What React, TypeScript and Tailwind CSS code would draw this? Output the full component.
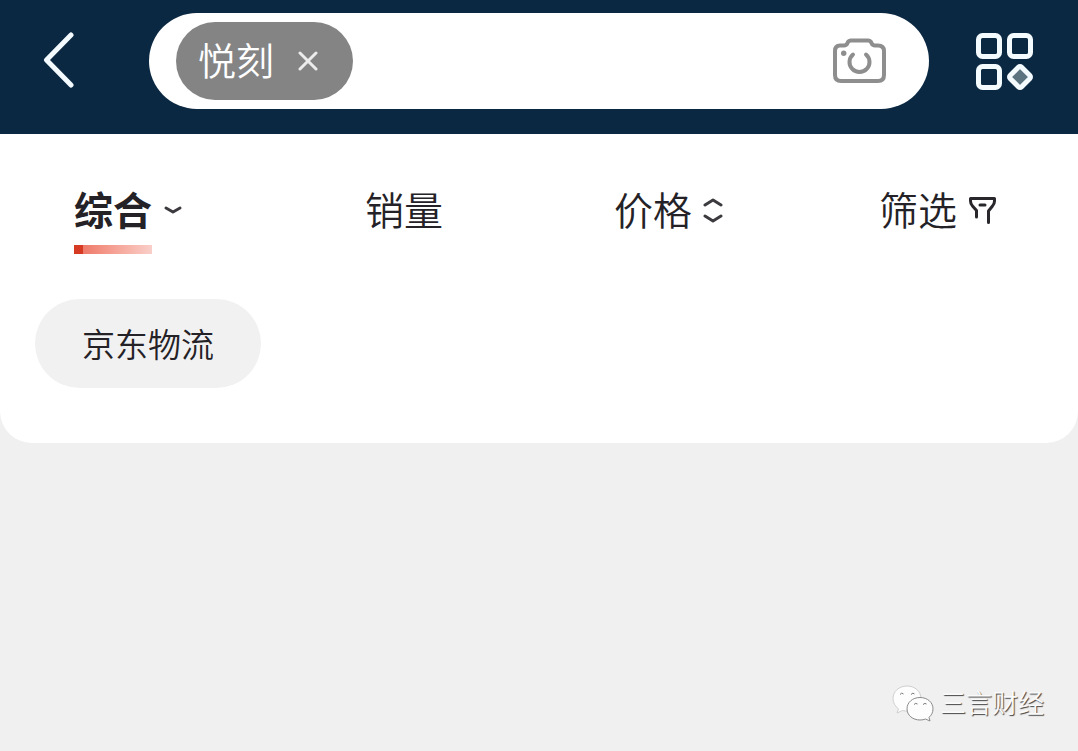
import { useState } from 'react';

function BackIcon() {
  return (
    <svg width="32" height="58" viewBox="0 0 32 58" fill="none" stroke="#f4fbff" strokeWidth="5" strokeLinecap="round" strokeLinejoin="round">
      <path d="M29 3 L4.500 28 L29 53" />
    </svg>
  );
}

function CloseIcon() {
  return (
    <svg width="20" height="20" viewBox="0 0 20 20" fill="none" stroke="#ececec" strokeWidth="3" strokeLinecap="round">
      <path d="M2 2 L18 18 M18 2 L2 18" />
    </svg>
  );
}

function CameraIcon() {
  return (
    <svg width="54" height="46" viewBox="0 0 54 46" fill="none" stroke="#8e8e8f" strokeWidth="4" strokeLinecap="round" strokeLinejoin="round">
      <path d="M7 7.5 H11 Q13.500 7.500 14.500 5 Q15.500 2.500 18 2.500 H35 Q37.500 2.500 38.500 5 Q39.500 7.500 42 7.500 H45 Q51 7.500 51 13 V37 Q51 43 45 43 H8 Q2 43 2 37 V13 Q2 7.500 7 7.500 Z" />
      <path d="M20 16.500 A10 10 0 1 0 33 16.500" />
      <circle cx="10.7" cy="15.3" r="2.7" fill="#8e8e8f" stroke="none" />
    </svg>
  );
}

function MenuIcon() {
  return (
    <svg width="58" height="58" viewBox="0 0 58 58" fill="none" stroke="#f4fbff" strokeWidth="5">
      <rect x="2.5" y="3.5" width="21" height="21" rx="4" />
      <rect x="33.5" y="3.5" width="21" height="21" rx="4" />
      <rect x="2.5" y="34.5" width="21" height="21" rx="4" />
      <rect x="36" y="37" width="16" height="16" rx="2" fill="#5c7480" transform="rotate(45 44 45)" />
    </svg>
  );
}

function ChevronIcon() {
  return (
    <svg width="20" height="10" viewBox="0 0 20 10" fill="none" stroke="#3c3a3e" strokeWidth="3" strokeLinecap="round" strokeLinejoin="round">
      <path d="M3 3 L10 7 L17 3" />
    </svg>
  );
}

function SortIcon() {
  return (
    <svg width="20" height="26" viewBox="0 0 20 26" fill="none" stroke="#3c3a3e" strokeWidth="3" strokeLinecap="round" strokeLinejoin="round">
      <path d="M2 8 L10 3 L18 8" />
      <path d="M2 19 L10 24 L18 19" />
    </svg>
  );
}

function FilterIcon() {
  return (
    <svg width="28" height="28" viewBox="0 0 28 28" fill="none" stroke="#29272b" strokeWidth="3" strokeLinecap="round" strokeLinejoin="round">
      <path d="M8.500 21 V14.500 L4.500 10 Q2.500 8 2.500 5 V2.500 H26.500 V5 Q26.500 8 24.500 10 L20.500 15 V26.500" />
      <path d="M12 9 H17" />
    </svg>
  );
}

function WechatIcon() {
  return (
    <svg width="42" height="38" viewBox="0 0 42 38" fill="#fdfdfd" stroke="#8a8a8a" strokeWidth="1" strokeLinejoin="round">
      <path d="M15 1 C7 1 1 6.500 1 13.500 C1 18 3.300 21.500 6.500 23.800 L5 28 L10.500 25.500 C14 26.500 19 26.500 22 24.500 C27 22 29 18 29 13.500 C29 6.500 23 1 15 1 Z" stroke="#cfcfcf" />
      <path d="M28 12.500 C20.500 12.500 15 17.500 15 23.800 C15 30.500 21 35 28 35 C30 35 32 34.700 33.500 34 L38 36 L37 32.300 C39.500 30.300 41 27.300 41 23.800 C41 17.500 35.500 12.500 28 12.500 Z" />
      <path d="M8 9.500 Q9.500 7 11.500 9 M19 9.500 Q21 7 22.500 9 M22 19.500 Q23.500 17.500 25.500 19 M31 19.500 Q33 17.500 34.500 19" fill="none" stroke="#777" />
    </svg>
  );
}

const sortTabs = [
  { key: 'all', label: '综合', icon: <ChevronIcon /> },
  { key: 'sales', label: '销量', icon: null },
  { key: 'price', label: '价格', icon: <SortIcon /> },
  { key: 'filter', label: '筛选', icon: <FilterIcon /> },
];

export default function App() {
  const [keyword, setKeyword] = useState('悦刻');
  const [text, setText] = useState('');
  const [active, setActive] = useState('all');

  return (
    <div className="flex min-h-screen flex-col bg-[#f1f0f1] font-['Noto_Sans_CJK_SC',sans-serif] text-[#242226]">
      <header className="flex items-center bg-[#0a2842] pt-[13px] pr-11 pb-[25px] pl-[42px]">
        <button type="button" aria-label="返回" className="shrink-0">
          <BackIcon />
        </button>
        <div className="mr-[47px] ml-[75px] flex h-24 min-w-0 flex-1 items-center rounded-full bg-white pr-[42px] pl-[27px]">
          {keyword && (
            <span className="flex h-[78px] shrink-0 items-center gap-6 rounded-full bg-[#848485] pr-[35px] pl-[22px] text-[38px] leading-[52px] font-[350] text-white">
              <span className="pb-1">{keyword}</span>
              <button type="button" aria-label="清除" onClick={() => setKeyword('')}>
                <CloseIcon />
              </button>
            </span>
          )}
          <input
            type="search"
            aria-label="搜索"
            value={text}
            onChange={(e) => setText(e.target.value)}
            className="h-full min-w-0 flex-1 bg-transparent px-4 text-[38px] outline-none"
          />
          <button type="button" aria-label="拍照搜索" className="shrink-0">
            <CameraIcon />
          </button>
        </div>
        <button type="button" aria-label="更多" className="shrink-0">
          <MenuIcon />
        </button>
      </header>

      <main className="rounded-b-[32px] bg-white pt-12 pb-[55px]">
        <nav className="grid grid-cols-[291fr_249fr_265fr_199fr] pl-[74px]">
          {sortTabs.map((tab) => (
            <button
              key={tab.key}
              type="button"
              onClick={() => setActive(tab.key)}
              className={`flex items-start text-[39px] leading-[52px] ${active === tab.key ? 'font-bold' : 'font-[350]'}`}
            >
              <span className="flex flex-col gap-[11px]">
                {tab.label}
                {active === tab.key && (
                  <span className="h-[9px] bg-linear-to-r from-[#d63a22] from-12% via-[#ee7a6a] via-12% to-[#f9cfc9]" />
                )}
              </span>
              {tab.icon && <span className="ml-[11px] flex h-[56px] items-center">{tab.icon}</span>}
            </button>
          ))}
        </nav>
        <div className="mt-[45px] px-[35px]">
          <button type="button" className="h-[89px] rounded-full bg-[#f2f1f2] px-[47px] pb-[2px] text-[33px] leading-[48px] font-[350]">
            京东物流
          </button>
        </div>
      </main>

      <footer className="mt-auto flex items-center justify-end gap-[6px] pr-[34px] pb-[26px]">
        <WechatIcon />
        <span className="pb-1 text-[26px] leading-[38px] font-[350] text-[#fafafa] [text-shadow:1px_1px_1px_#444]">三言财经</span>
      </footer>
    </div>
  );
}
